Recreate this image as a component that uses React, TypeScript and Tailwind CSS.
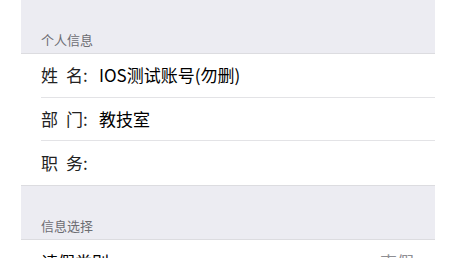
import React from "react";

const font = { fontFamily: '"Noto Sans CJK SC", "Liberation Sans", sans-serif' };

function Row({ label1, label2, value, last }: { label1: string; label2: string; value?: string; last?: boolean }) {
  return (
    <div className="pl-[20px] bg-white">
      <div className={`h-[43.5px] flex items-center text-[17px] leading-[20px] ${last ? "" : "border-b border-[#e3e3e6]"}`}>
        <span className="text-[#222] w-[15px]">{label1}</span>
        <span className="text-[#222] ml-[10px] w-[15px]">{label2}</span>
        <span className="text-[#222] ml-[2px] w-[16px]">:</span>
        {value && <span className="text-black">{value}</span>}
      </div>
    </div>
  );
}

export default function App() {
  return (
    <div className="w-[453px] h-[258px] overflow-hidden bg-white" style={font}>
      <div className="mx-[21px] w-[414px]">
        <div className="h-[54px] bg-[#ececf2] border-b border-[#dcdce0] flex items-end pl-[20px] pb-[5px] text-[13px] leading-[16px] text-[#6d6d72]">
          个人信息
        </div>
        <Row label1="姓" label2="名" value="IOS测试账号(勿删)" />
        <Row label1="部" label2="门" value="教技室" />
        <Row label1="职" label2="务" last />
        <div className="h-[55px] bg-[#ececf2] border-y border-[#dcdce0] flex items-end pl-[20px] pb-[5px] text-[13px] leading-[16px] text-[#6d6d72]">
          信息选择
        </div>
        <div className="h-[44px] bg-white flex items-center justify-between pl-[20px] pr-[21px] text-[17px] leading-[20px]">
          <span className="text-black">请假类别</span>
          <span className="text-[#8e8e93]">事假</span>
        </div>
      </div>
    </div>
  );
}
